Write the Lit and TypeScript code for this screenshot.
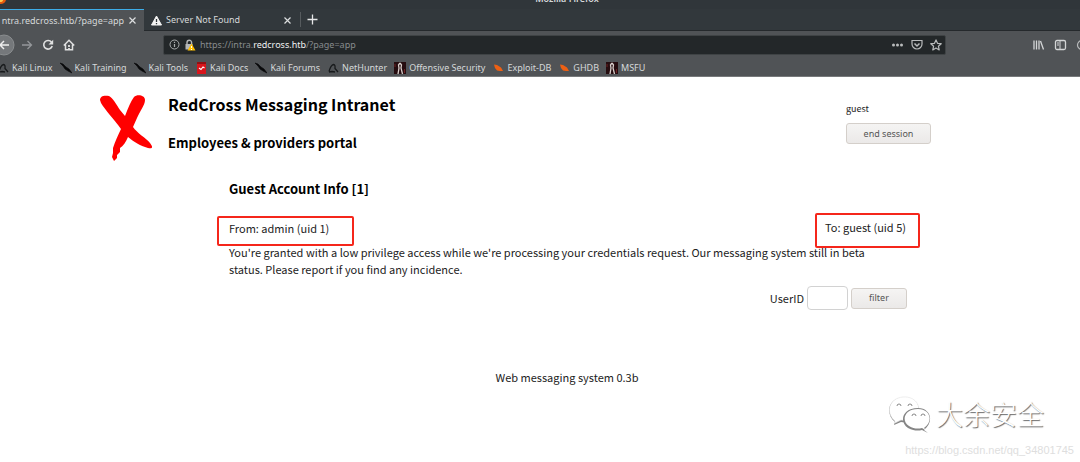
import { LitElement, html, css, svg } from "lit";
import { customElement } from "lit/decorators.js";

const dragon = svg`<path d="M0 1 L3 2 L6 5 L9 7 L12 11 L8 9 L5 7 L3 4 Z" fill="#08090a" stroke="#08090a" stroke-width=".6"/>`;
const kaliMark = svg`<path d="M2 9.500 C3 6 4 3 6.500 2.500 C8.500 2.500 8 5 8 6.500 L11 10 M2 10 L5 9.500 L8 10" fill="none" stroke="#17191b" stroke-width="1.300"/>`;
const book = svg`<rect x="2" y="0" width="9" height="12" fill="#d8151c"/><rect x="2" y="0" width="9" height="2" fill="#8f1114"/><path d="M4 6 L6 7.500 L8 5 L9.500 6" fill="none" stroke="#fff" stroke-width="1.100"/>`;
const offsec = svg`<rect width="12" height="12" fill="#250c0f"/><path d="M6 1 L7.500 3 L7 6 L8.500 12 M6 1 L4.500 3 L5 6 L4 12" fill="none" stroke="#d9cfcc" stroke-width="1.300"/><path d="M1 2v3M10.500 7v4" stroke="#6b2022"/>`;
const orange = svg`<path d="M2 2.500 L5 3 L9 5.500 L11 9 L8 9 L5 8.500 L3 6 Z" fill="#ee6013"/>`;

const bookmarks = [
  { label: "Kali Linux", icon: kaliMark },
  { label: "Kali Training", icon: dragon },
  { label: "Kali Tools", icon: dragon },
  { label: "Kali Docs", icon: book },
  { label: "Kali Forums", icon: dragon },
  { label: "NetHunter", icon: kaliMark },
  { label: "Offensive Security", icon: offsec },
  { label: "Exploit-DB", icon: orange },
  { label: "GHDB", icon: orange },
  { label: "MSFU", icon: offsec },
];

@customElement("browser-chrome")
class BrowserChrome extends LitElement {
  static styles = css`
    :host { display: block; font: 9px/14px "Noto Sans", sans-serif; color: #d6d9da; }
    * { box-sizing: border-box; }
    svg { display: block; flex: none; }
    button { display: grid; place-items: center; padding: 0; border: 0; background: none; color: inherit; font: inherit; }
    .title { display: flex; align-items: flex-end; justify-content: center; height: 9px; padding-left: 54px; background: #30363a; overflow: hidden; line-height: 10px; position: relative; }
    .title span { height: 15px; font-weight: 600; }
    .fox { position: absolute; left: 0; top: 0; }
    .tabs { display: flex; height: 22px; background: #32383c; border-bottom: 1px solid #25292c; }
    .tab { display: flex; align-items: center; justify-content: space-between; height: 22px; white-space: nowrap; }
    .active { width: 144px; padding-right: 7px; gap: 4px; justify-content: flex-end; background: #505356; border-top: 1px solid #3daee9; }
    .other { width: 156px; padding: 0 8px 0 7px; }
    .other .name { flex: 1; padding-left: 4px; }
    .add { width: 23px; border-left: 1px solid #565b5e; margin: 3px 0; }
    .nav { display: flex; align-items: center; height: 27px; background: #505356; }
    .back { margin-right: -3px; }
    .tools { flex: none; display: flex; align-items: center; gap: 9px; width: 163px; }
    .url { flex: 1; min-width: 0; display: flex; align-items: center; height: 20px; padding: 0 3px 0 5px; gap: 4px; background: #232729; border: 1px solid #3f4345; border-radius: 2px; }
    .address { flex: 1; min-width: 0; color: #878b8d; }
    .address b { font-weight: 400; color: #eff0f1; }
    .urlicons { display: flex; gap: 7px; align-items: center; }
    .right { flex: none; width: 134px; display: flex; justify-content: flex-end; gap: 9px; overflow: hidden; }
    .marks { display: flex; align-items: center; height: 19px; gap: 7px; padding-top: 1px; background: #505356; border-bottom: 1px solid #77797b; overflow: hidden; white-space: nowrap; }
    .marks a { display: flex; align-items: center; gap: 3px; color: inherit; text-decoration: none; }
    .marks a:first-child { margin-left: -3px; }
  `;
  render() {
    return html`
      <div class="title">
        <svg class="fox" width="8" height="6" viewBox="0 0 8 6"><path d="M0 0h6a6 5 0 0 1-6 4z" fill="#e8590c"/><path d="M0 0h3a3 2 0 0 1-3 2z" fill="#ffc94d"/></svg>
        <span>Mozilla Firefox</span>
      </div>
      <div class="tabs">
        <div class="tab active"><span class="name">ntra.redcross.htb/?page=app</span>
          <button aria-label="Close tab"><svg width="9" height="9" viewBox="0 0 9 9"><path d="M1.500 1.500l6 6m0-6l-6 6" stroke="#dcdedf" stroke-width="1.200"/></svg></button>
        </div>
        <div class="tab other">
          <svg width="11" height="11" viewBox="0 0 11 11"><path d="M5.500 1 L10.500 10 H.5Z" fill="#f4f4f4" stroke="#f4f4f4" stroke-linejoin="round"/><path d="M5.500 4v3M5.500 8v1.200" stroke="#30363a" stroke-width="1.300"/></svg>
          <span class="name">Server Not Found</span>
          <button aria-label="Close tab"><svg width="9" height="9" viewBox="0 0 9 9"><path d="M1.500 1.500l6 6m0-6l-6 6" stroke="#dcdedf" stroke-width="1.200"/></svg></button>
        </div>
        <button class="add" aria-label="New tab"><svg width="11" height="11" viewBox="0 0 11 11"><path d="M5.500 .5v10M.5 5.500h10" stroke="#e6e7e8" stroke-width="1.300"/></svg></button>
      </div>
      <div class="nav">
        <div class="tools">
          <button class="back" aria-label="Back"><svg width="15" height="22" viewBox="0 0 15 22"><circle cx="4" cy="11" r="10" fill="#75787b" stroke="#8a8d8f"/><path d="M9 11H0M4 7L0 11l4 4" fill="none" stroke="#eee" stroke-width="1.500"/></svg></button>
          <button aria-label="Forward"><svg width="12" height="12" viewBox="0 0 12 12"><path d="M1 6h9.500M6.500 2l4 4-4 4" fill="none" stroke="#94979a" stroke-width="1.300"/></svg></button>
          <button aria-label="Reload"><svg width="12" height="12" viewBox="0 0 12 12"><path d="M9.500 3.200A4.300 4.300 0 1 0 10.200 7" fill="none" stroke="#e0e1e1" stroke-width="1.600"/><path d="M11.200 .8v4.700H6.500Z" fill="#e0e1e1"/></svg></button>
          <button aria-label="Home"><svg width="12" height="12" viewBox="0 0 12 12"><path d="M.8 6.500L6 1.200l5.200 5.300M2.500 5.500v5.300h7V5.500" fill="none" stroke="#e0e1e1" stroke-width="1.500"/><path d="M6 6v2M6 9v2" stroke="#e0e1e1" stroke-width="1.800"/></svg></button>
        </div>
        <div class="url">
          <svg width="11" height="11" viewBox="0 0 11 11"><circle cx="5.500" cy="5.500" r="4.500" fill="none" stroke="#a9acad"/><path d="M5.500 5v3M5.500 2.800v1.200" stroke="#a9acad" stroke-width="1.200"/></svg>
          <svg width="12" height="12" viewBox="0 0 12 12"><path d="M3 6V3.500a2.300 2.300 0 0 1 4.600 0V6" fill="none" stroke="#b5b7b8" stroke-width="1.400"/><rect x="1.500" y="5" width="7" height="5.500" fill="#b5b7b8"/><path d="M7.500 4.500 L11.500 11.500H3.500Z" fill="#ffbf00"/><path d="M7.500 7v2M7.500 10v1" stroke="#fff"/></svg>
          <div class="address">https://intra.<b>redcross.htb</b>/?page=app</div>
          <div class="urlicons">
            <svg width="13" height="12" viewBox="0 0 13 12" fill="#b9bbbc"><circle cx="2.500" cy="6" r="1.500"/><circle cx="6.500" cy="6" r="1.500"/><circle cx="10.500" cy="6" r="1.500"/></svg>
            <svg width="12" height="12" viewBox="0 0 12 12" fill="none" stroke="#b9bbbc" stroke-width="1.200"><path d="M1 1.500h10V5a5 5 0 0 1-10 0Z"/><path d="M3.500 4.500L6 7l2.500-2.500" stroke-width="1.500"/></svg>
            <svg width="12" height="12" viewBox="0 0 12 12"><path d="M6 .9l1.500 3.400 3.700.4-2.800 2.500.8 3.700L6 9.100l-3.200 1.800.8-3.700L.8 4.700l3.700-.4Z" fill="none" stroke="#b9bbbc" stroke-width="1.200" stroke-linejoin="round"/></svg>
          </div>
        </div>
        <div class="right">
          <svg width="13" height="12" viewBox="0 0 13 12"><path d="M2 1.500v9M4.500 1.500v9M7 1.500v9M8.500 2l3 8.500" stroke="#d3d5d6" stroke-width="1.300"/></svg>
          <svg width="13" height="12" viewBox="0 0 13 12"><rect x="1.500" y="1.500" width="10" height="9" rx="1.500" fill="none" stroke="#d3d5d6" stroke-width="1.300"/><path d="M6 1.500v9M3 4h2M3 6h2" stroke="#d3d5d6"/></svg>
          <svg width="4" height="12" viewBox="0 0 4 12"><circle cx="6" cy="6" r="4.500" fill="none" stroke="#b9bbbc" stroke-width="1.200"/></svg>
        </div>
      </div>
      <nav class="marks">
        ${bookmarks.map((b) => html`<a href="#"><svg width="12" height="12" viewBox="0 0 12 12">${b.icon}</svg>${b.label}</a>`)}
      </nav>
    `;
  }
}

@customElement("app-root")
class AppRoot extends LitElement {
  static styles = css`
    :host { display: block; min-height: 100vh; position: relative; background: #fff; color: #222; font: 11px/17px "Noto Sans CJK SC", sans-serif; }
    * { box-sizing: border-box; }
    h1, h2, h3, p { margin: 0; color: #000; }
    .head { display: flex; padding: 17px 149px 0 100px; }
    .logo { flex: none; width: 54px; height: 68px; }
    .titles { flex: 1; padding-left: 14px; }
    h1 { font-size: 16px; line-height: 20px; }
    h2 { font-size: 13px; line-height: 20px; margin-top: 19px; }
    .user { width: 85px; padding-top: 8px; font-size: 9px; line-height: 14px; }
    button { display: block; height: 21px; padding: 0; border: 1px solid #d4cfca; border-radius: 3px; background: linear-gradient(#f5f4f3, #ebe9e8); color: #555; font: 9px/14px "Noto Sans", sans-serif; }
    .user button { width: 85px; margin-top: 7px; }
    .message { padding: 17px 160px 0 217px; }
    h3 { font-size: 13px; line-height: 20px; padding-left: 12px; }
    .route { display: flex; justify-content: space-between; align-items: center; margin-top: 14px; }
    .mark { border: 2px solid #f5261b; border-radius: 2px; }
    .from { width: 137px; height: 30px; padding: 2px 10px; }
    .to { width: 105px; height: 35px; padding: 4px 8px; white-space: nowrap; }
    .message p { color: #222; padding: 0 20px 0 12px; margin-top: -4px; }
    .filter { display: flex; justify-content: flex-end; align-items: center; gap: 3px; padding: 8px 13px 0 0; }
    .filter input { width: 41px; height: 24px; border: 1px solid #d2d2d2; border-radius: 4px; background: #fff; font: inherit; }
    .filter button { width: 56px; }
    footer { padding: 59px 0 0 54px; text-align: center; }
    .brand { position: absolute; right: 36px; bottom: 28px; display: flex; align-items: center; gap: 4px; color: #fff; font-size: 27px; font-weight: 300; line-height: 40px; text-shadow: 1px 1px 1px #666; }
    .source { position: absolute; right: 6px; bottom: 4px; color: #dedede; font: 11px/16px "Liberation Sans", sans-serif; }
  `;
  render() {
    return html`
      <browser-chrome></browser-chrome>
      <header class="head">
        <svg class="logo" viewBox="0 0 54 68" fill="#f00"><path d="M0 6C0 2 4 1 9 2C13 4 16 10 20 16L25 22C28 14 31 7 34 3C37 0 45 1 45 6C45 11 40 17 37 24L33 33C37 39 46 44 50 49C53 53 53 55 48 54C40 52 33 47 28 43C26 48 23 52 20 54L20 58L17 61L17 64L14 67L12 63L13 59L13 54C15 48 18 41 21 35C14 25 5 16 1 9Z"/></svg>
        <div class="titles"><h1>RedCross Messaging Intranet</h1><h2>Employees &amp; providers portal</h2></div>
        <div class="user">guest<button>end session</button></div>
      </header>
      <section class="message">
        <h3>Guest Account Info [1]</h3>
        <div class="route"><div class="mark from">From: admin (uid 1)</div><div class="mark to">To: guest (uid 5)</div></div>
        <p>You're granted with a low privilege access while we're processing your credentials request. Our messaging system still in beta status. Please report if you find any incidence.</p>
        <div class="filter"><label for="uid">UserID</label><input id="uid" type="text"><button>filter</button></div>
      </section>
      <footer>Web messaging system 0.3b</footer>
      <div class="brand">
        <svg width="44" height="38" viewBox="0 0 44 38" stroke-width="1">
          <path d="M7 27C-3 19 0 3 15 3C27 2 34 11 29 20C26 27 19 28 13 27L6 30Z" fill="#858585"/>
          <path d="M7 26C-3 18 1 3 15 2C27 1 34 11 29 19C26 26 19 26 13 25L7 28Z" fill="#fff" stroke="#e2e2e2" stroke-width=".6"/>
          <path d="M36 35C47 26 42 13 30 13C14 13 11 27 20 33C26 36 30 36 34 35L40 38Z" fill="#858585"/>
          <path d="M36 33C46 26 42 14 30 14C16 14 13 26 21 31C26 34 30 34 34 33L39 36Z" fill="#fff"/>
          <path d="M9 11a2 2 0 0 1 4 0M20 11a2 2 0 0 1 4 0M24 21a2 2 0 0 1 4 0M33 21a2 2 0 0 1 4 0" fill="none" stroke="#888"/>
        </svg>
        <span>大余安全</span>
      </div>
      <div class="source">https://blog.csdn.net/qq_34801745</div>
    `;
  }
}
